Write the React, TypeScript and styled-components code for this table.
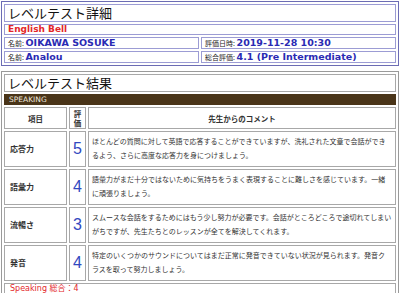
import React, { FC } from "react"
import styled, { createGlobalStyle } from "styled-components"

type Result = {
  label: string
  score: number
  comment: string[]
}

// comment lines are kept as they wrap on the original sheet
const results: Result[] = [
  {
    label: "応答力",
    score: 5,
    comment: [
      "ほとんどの質問に対して英語で応答することができていますが、洗礼された文章で会話ができ",
      "るよう、さらに高度な応答力を身につけましょう。",
    ],
  },
  {
    label: "語彙力",
    score: 4,
    comment: [
      "語彙力がまだ十分ではないために気持ちをうまく表現することに難しさを感じています。一緒",
      "に頑張りましょう。",
    ],
  },
  {
    label: "流暢さ",
    score: 3,
    comment: [
      "スムースな会話をするためにはもう少し努力が必要です。会話がところどころで途切れてしまい",
      "がちですが、先生たちとのレッスンが全てを解決してくれます。",
    ],
  },
  {
    label: "発音",
    score: 4,
    comment: [
      "特定のいくつかのサウンドについてはまだ正常に発音できていない状況が見られます。発音ク",
      "ラスを取って努力しましょう。",
    ],
  },
]

const App: FC = () => {
  return (
    <Page>
      <GlobalStyle />
      <InfoTable>
        <tbody>
          <tr>
            <TitleCell colSpan={2}>レベルテスト詳細</TitleCell>
          </tr>
          <tr>
            <BrandCell colSpan={2}>English Bell</BrandCell>
          </tr>
          <tr>
            <FieldCell>
              <Label>名前: </Label>
              <Value>OIKAWA SOSUKE</Value>
            </FieldCell>
            <FieldCell>
              <Label>評価日時: </Label>
              <Value>2019-11-28 10:30</Value>
            </FieldCell>
          </tr>
          <tr>
            <FieldCell>
              <Label>名前: </Label>
              <Value>Analou</Value>
            </FieldCell>
            <FieldCell>
              <Label>総合評価: </Label>
              <Value>4.1 (Pre Intermediate)</Value>
            </FieldCell>
          </tr>
        </tbody>
      </InfoTable>

      <ResultTable>
        <colgroup>
          <col style={{ width: 63 }} />
          <col style={{ width: 17 }} />
          <col />
        </colgroup>
        <tbody>
          <tr>
            <ResultTitle colSpan={3}>レベルテスト結果</ResultTitle>
          </tr>
          <tr>
            <SectionBar colSpan={3}>SPEAKING</SectionBar>
          </tr>
          <tr>
            <HeadCell>項目</HeadCell>
            <HeadCell $narrow>評価</HeadCell>
            <HeadCell>先生からのコメント</HeadCell>
          </tr>
          {results.map((r) => (
            <tr key={r.label}>
              <ItemCell>{r.label}</ItemCell>
              <ScoreCell>{r.score}</ScoreCell>
              <CommentCell>
                {r.comment.map((line) => (
                  <CommentLine key={line}>{line}</CommentLine>
                ))}
              </CommentCell>
            </tr>
          ))}
          <tr>
            <TotalCell colSpan={3}>Speaking 総合：4</TotalCell>
          </tr>
        </tbody>
      </ResultTable>
    </Page>
  )
}

export default App

const GlobalStyle = createGlobalStyle`
  html, body {
    margin: 0;
    padding: 0;
    background: #fff;
  }
  body {
    font-family: "DejaVu Sans", "Noto Sans CJK JP", sans-serif;
    font-size: 8px;
    line-height: 1;
    color: #222;
  }
`

const Page = styled.div`
  width: 400px;
  padding: 1px 1px 0 1px;
  box-sizing: border-box;
`

const InfoTable = styled.table`
  width: 100%;
  border: 1px solid #6c6cb4;
  border-spacing: 2px;
  margin-bottom: 5px;
  font-size: 8px;

  td {
    border: 1px solid #9c9cd4;
    padding: 0 3px;
    white-space: nowrap;
  }
`

const TitleCell = styled.td`
  font-family: "Noto Sans CJK JP", sans-serif;
  font-size: 13px;
  line-height: 16px;
  height: 16px;
  color: #111;
`

const BrandCell = styled.td`
  font-size: 9px;
  font-weight: bold;
  line-height: 9px;
  height: 9px;
  color: #e3262a;
`

const FieldCell = styled.td`
  width: 50%;
  font-size: 9px;
  line-height: 10px;
  height: 10px;
`

const Label = styled.span`
  font-family: "Noto Sans CJK JP", sans-serif;
  font-size: 7px;
  color: #222;
`

const Value = styled.span`
  font-size: 9.5px;
  font-weight: bold;
  color: #2a2ab4;
`

const ResultTable = styled.table`
  width: 100%;
  table-layout: fixed;
  border: 1px solid #9a9a9a;
  border-spacing: 2px;
  font-size: 8px;

  td {
    border: 1px solid #a8a8a8;
  }
`

const ResultTitle = styled.td`
  font-family: "Noto Sans CJK JP", sans-serif;
  font-size: 13px;
  line-height: 16px;
  height: 16px;
  padding: 0 3px;
  color: #111;
`

const SectionBar = styled.td`
  && {
    border-color: #4a3519;
  }
  background: #4a3519;
  color: #efe9df;
  font-size: 7.5px;
  line-height: 9px;
  height: 9px;
  padding: 0 4px;
`

const HeadCell = styled.td<{ $narrow?: boolean }>`
  font-family: "Noto Sans CJK JP", sans-serif;
  font-size: 7.5px;
  font-weight: bold;
  line-height: 9px;
  height: 18px;
  text-align: center;
  padding: ${(p) => (p.$narrow ? "1px 1px" : "1px 2px")};
  color: #333;
`

const ItemCell = styled.td`
  font-family: "Noto Sans CJK JP", sans-serif;
  font-size: 8px;
  font-weight: bold;
  padding: 0 5px;
  color: #333;
`

const ScoreCell = styled.td`
  font-family: "Liberation Sans", sans-serif;
  font-size: 16px;
  text-align: center;
  color: #3148c0;
  padding: 0;
`

const CommentCell = styled.td`
  font-family: "Noto Sans CJK JP", sans-serif;
  font-size: 7px;
  line-height: 13.5px;
  padding: 3px 0 4px 3px;
  color: #333;
`

const CommentLine = styled.div`
  white-space: nowrap;
`

const TotalCell = styled.td`
  font-family: "DejaVu Sans", "Noto Sans CJK JP", sans-serif;
  font-size: 8px;
  line-height: 10px;
  color: #e3262a;
  padding: 0 5px 1px;
`
